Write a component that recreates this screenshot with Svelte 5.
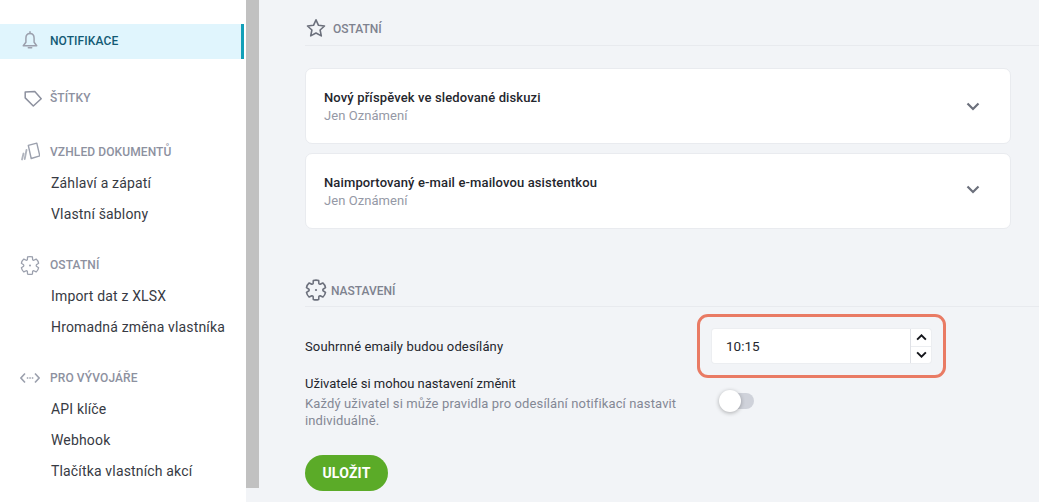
<script>
    const groups = [
        { title: "VZHLED DOKUMENTŮ", icon: "docs", links: ["Záhlaví a zápatí", "Vlastní šablony"] },
        { title: "OSTATNÍ", icon: "gear", links: ["Import dat z XLSX", "Hromadná změna vlastníka"] },
        { title: "PRO VÝVOJÁŘE", icon: "code", links: ["API klíče", "Webhook", "Tlačítka vlastních akcí"] },
    ];
    const cards = ["Nový příspěvek ve sledované diskuzi", "Naimportovaný e-mail e-mailovou asistentkou"];

    // six lobes, same outline for the sidebar and the heading
    function gearOutline() {
        const pt = (r, deg) => {
            const a = ((deg - 90) * Math.PI) / 180;
            return `${(12 + r * Math.cos(a)).toFixed(2)} ${(12 + r * Math.sin(a)).toFixed(2)}`;
        };
        let d = "";
        for (let i = 0; i < 6; i++) {
            const c = i * 60;
            d += `${i ? "L" : "M"}${pt(10.7, c - 16)} Q${pt(11.3, c)} ${pt(10.7, c + 16)} L${pt(7.7, c + 24)} Q${pt(7.2, c + 30)} ${pt(7.7, c + 36)} `;
        }
        return d + "L" + pt(10.7, -16) + "Z";
    }
    const gearPath = gearOutline();
</script>

{#snippet gear(size, weight)}
    <svg width={size} height={size} viewBox="0 0 24 24" fill="none" stroke="currentColor" stroke-width={weight} stroke-linejoin="round">
        <path d={gearPath} />
        <circle cx="12" cy="12" r="1.200" fill="currentColor" stroke="none" />
    </svg>
{/snippet}

<div class="page">
    <aside class="sidebar">
        <a class="item active" href="#n">
            <span class="icon">
                <svg width="16" height="19" viewBox="0 0 16 19" fill="none" stroke="currentColor" stroke-width="1.500" stroke-linejoin="round">
                    <path d="M8 2.500c-2.900 0-4.100 2.200-4.100 4.800v3.900L1.300 14.800h13.400l-2.600-3.600V7.300C12.100 4.700 10.900 2.500 8 2.500z" />
                    <path d="M8 .8v1.700M6.300 16.800h3.400" stroke-linecap="round" />
                </svg>
            </span>
            NOTIFIKACE
        </a>
        <a class="item tags" href="#s">
            <span class="icon">
                <svg class="tag" width="18" height="18" viewBox="0 0 18 18" fill="none" stroke="currentColor" stroke-width="1.500" stroke-linejoin="round">
                    <path d="M1.200 3 10.800 2.500 17.200 9.700 9.300 17 1.200 8.900z" />
                </svg>
            </span>
            ŠTÍTKY
        </a>

        {#each groups as group}
            <section class="group">
                <h4 class="item">
                    <span class="icon">
                        {#if group.icon === "docs"}
                            <svg width="20" height="20" viewBox="0 0 20 20" fill="none" stroke="currentColor" stroke-width="1.400" stroke-linejoin="round">
                                <path d="M8.300 3.400l8.500-2.300 3 12.800-8.600 2.600z" />
                                <path d="M6.500 8 4.700 17M3.500 11.500 2 17.500" stroke-width="1.800" stroke-linecap="round" opacity="0.8" />
                            </svg>
                        {:else if group.icon === "gear"}
                            {@render gear(21, 1.5)}
                        {:else}
                            <svg width="20" height="12" viewBox="0 0 20 12" fill="none" stroke="currentColor" stroke-width="1.600">
                                <path d="M5 1.500.9 6 5 10.500M15 1.500 19.100 6 15 10.500" />
                                <path d="M6.800 6h1.500M9.300 6h1.500M11.800 6h1.500" />
                            </svg>
                        {/if}
                    </span>
                    {group.title}
                </h4>
                {#each group.links as link}
                    <a class="link" href="#l">{link}</a>
                {/each}
            </section>
        {/each}
    </aside>

    <div class="scrollbar"><div class="thumb"></div></div>

    <main class="content">
        <h3 class="heading first">
            <svg class="star" width="20" height="20" viewBox="0 0 20 20" fill="none" stroke="currentColor" stroke-width="1.600" stroke-linejoin="round">
                <path d="M10 1.800l2.500 5.500 6 .7-4.400 4 1.200 5.900L10 15l-5.300 2.900 1.200-5.900-4.400-4 6-.7z" />
            </svg>
            OSTATNÍ
        </h3>

        <div class="cards">
            {#each cards as card}
                <div class="card">
                    <div class="card-text">
                        <div class="card-title">{card}</div>
                        <div class="card-sub">Jen Oznámení</div>
                    </div>
                    <svg class="chevron" width="14" height="9" viewBox="0 0 14 9" fill="none" stroke="currentColor" stroke-width="2.200">
                        <path d="M1.500 1.500 7 7l5.500-5.500" />
                    </svg>
                </div>
            {/each}
        </div>

        <h3 class="heading second">
            <span class="head-gear">{@render gear(22, 1.7)}</span>
            NASTAVENÍ
        </h3>

        <div class="form">
            <div class="row summary">
                <span class="label">Souhrnné emaily budou odesílány</span>
                <div class="highlight">
                    <div class="time">
                        <span>10:15</span>
                        <div class="spinner">
                            <button aria-label="Nahoru">
                                <svg width="11" height="7" viewBox="0 0 12 8" fill="none" stroke="currentColor" stroke-width="2.200"><path d="M1 6.500l5-5 5 5" /></svg>
                            </button>
                            <button aria-label="Dolů">
                                <svg width="11" height="7" viewBox="0 0 12 8" fill="none" stroke="currentColor" stroke-width="2.200"><path d="M1 1.500l5 5 5-5" /></svg>
                            </button>
                        </div>
                    </div>
                </div>
            </div>
            <div class="row change">
                <div class="change-text">
                    <div class="label plain">Uživatelé si mohou nastavení změnit</div>
                    <p>Každý uživatel si může pravidla pro odesílání notifikací nastavit individuálně.</p>
                </div>
                <div class="toggle"><span class="knob"></span></div>
            </div>
        </div>

        <button class="save">ULOŽIT</button>
    </main>
</div>

<style>
    :global(body) {
        margin: 0;
        background: #f2f4f7;
    }
    .page {
        display: flex;
        height: 502px;
        overflow: hidden;
        font-family: Roboto, "Liberation Sans", sans-serif;
        color: #24262d;
        background: #f2f4f7;
    }
    a {
        text-decoration: none;
        color: inherit;
    }

    /* Sidebar */
    .sidebar {
        box-sizing: border-box;
        flex: 0 0 246px;
        width: 246px;
        padding: 24px 2px 0 0;
        background: #fff;
    }
    .item {
        display: flex;
        align-items: center;
        height: 35px;
        margin: 0;
        font-size: 12px;
        font-weight: 500;
        color: #8d919f;
        letter-spacing: 0.1px;
    }
    .item .icon {
        display: flex;
        justify-content: center;
        flex: 0 0 20px;
        min-width: 0;
        margin: 0 10px 0 20px;
        color: #9ba0ad;
    }
    .item.active {
        box-sizing: border-box;
        padding-bottom: 2px;
        background: #e0f5fd;
        color: #125a74;
        box-shadow: inset -3px 0 0 #119fb8;
    }
    .tags {
        margin-top: 21px;
    }
    .tags .icon {
        color: #8d919f;
    }
    .tag {
        flex-shrink: 0;
        margin-left: 6px;
    }
    .group {
        display: flex;
        flex-direction: column;
        margin-bottom: 24px;
    }
    .group:first-of-type {
        margin-top: 26px;
    }
    .group .item {
        height: 22px;
        margin-bottom: 5px;
    }
    .link {
        display: block;
        height: 31px;
        line-height: 31px;
        padding-left: 51px;
        font-size: 14px;
        letter-spacing: 0.16px;
        color: #373a43;
    }

    /* Scrollbar */
    .scrollbar {
        flex: 0 0 13px;
    }
    .thumb {
        height: 488px;
        background: #c1c1c1;
    }

    /* Main column */
    .content {
        flex: 1;
        min-width: 0;
        padding-left: 46px;
    }
    .heading {
        display: flex;
        align-items: center;
        box-sizing: border-box;
        margin: 0;
        font-size: 12px;
        font-weight: 500;
        color: #7e828f;
        border-bottom: 1px solid #e8eaee;
    }
    .heading.first {
        height: 46px;
        padding: 12px 0 0 1px;
        gap: 7px;
    }
    .star {
        margin-top: -2px;
        color: #6c707c;
    }
    .heading.second {
        height: 33px;
        margin-top: 45px;
        padding-top: 2px;
        gap: 4px;
    }
    .head-gear {
        display: flex;
        margin-top: -2px;
        color: #6c707c;
    }
    .cards {
        display: flex;
        flex-direction: column;
        gap: 9px;
        width: 706px;
        margin-top: 22px;
    }
    .card {
        box-sizing: border-box;
        display: flex;
        align-items: center;
        justify-content: space-between;
        height: 76px;
        padding: 0 30px 0 18px;
        background: #fff;
        border: 1px solid #e9ebef;
        border-radius: 7px;
    }
    .card-text {
        padding-top: 2px;
    }
    .card-title {
        font-size: 13px;
        font-weight: 500;
        line-height: 18px;
        letter-spacing: 0.13px;
        color: #24262d;
    }
    .card-sub {
        font-size: 13px;
        line-height: 18px;
        letter-spacing: 0.05px;
        color: #9599a6;
    }
    .chevron {
        color: #6c707c;
    }
    .card:last-child .chevron {
        margin-bottom: 4px;
    }

    /* Form */
    .form {
        width: 641px;
    }
    .row {
        display: flex;
    }
    .summary {
        align-items: center;
        justify-content: space-between;
        margin-top: 7px;
    }
    .label {
        font-size: 13px;
        line-height: 18px;
        letter-spacing: 0.13px;
    }
    .summary .label {
        padding-top: 2px;
    }
    .label.plain {
        letter-spacing: 0;
    }
    .highlight {
        box-sizing: border-box;
        width: 249px;
        height: 64px;
        padding: 12px;
        border: 3px solid #e97b64;
        border-radius: 11px;
    }
    .time {
        display: flex;
        align-items: center;
        justify-content: space-between;
        height: 34px;
        padding-left: 14px;
        font-size: 13.500px;
        background: #fff;
        border-radius: 3px;
        box-shadow: 0 0 0 1px #eceef1;
    }
    .spinner {
        display: flex;
        flex-direction: column;
        width: 20px;
        height: 100%;
        border-left: 1px solid #dfe1e6;
    }
    .spinner button {
        flex: 1;
        display: flex;
        align-items: center;
        justify-content: center;
        padding: 0;
        border: 0;
        background: none;
        color: #14161b;
    }
    .spinner button + button {
        border-top: 1px solid #eceef1;
    }
    .change {
        margin-top: -3px;
    }
    .change-text {
        width: 414px;
    }
    .change-text p {
        margin: 2px 0 0;
        font-size: 13px;
        line-height: 17px;
        letter-spacing: 0.13px;
        color: #848895;
    }
    .toggle {
        position: relative;
        width: 24px;
        height: 16px;
        margin: 18px 0 0 11px;
        border-radius: 8px;
        background: #cfd2da;
    }
    .knob {
        position: absolute;
        left: -11px;
        top: -3px;
        width: 22px;
        height: 22px;
        border-radius: 50%;
        background: #fff;
        box-shadow: 0 1px 4px rgba(0, 0, 0, 0.3);
    }
    .save {
        display: block;
        width: 83px;
        height: 36px;
        margin-top: 26px;
        padding: 0;
        border: 0;
        border-radius: 18px;
        font-family: inherit;
        font-size: 14px;
        font-weight: 700;
        letter-spacing: 0.2px;
        color: #fff;
        background: #5bab28;
    }
</style>
